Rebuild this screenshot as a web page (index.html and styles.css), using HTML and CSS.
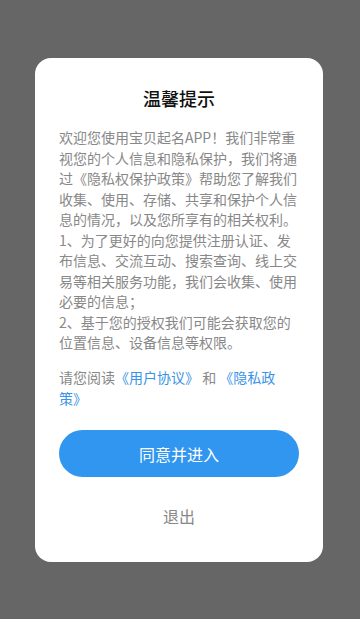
FILE: index.html
```html
<!DOCTYPE html>
<html lang="zh">
<head>
<meta charset="utf-8">
<link rel="stylesheet" href="styles.css">
</head>
<body>
<div class="screen">
  <div class="dialog">
    <h1 class="title">温馨提示</h1>
    <p class="body">欢迎您使用宝贝起名APP！我们非常重视您的个人信息和隐私保护，我们将通过《隐私权保护政策》帮助您了解我们收集、使用、存储、共享和保护个人信息的情况，以及您所享有的相关权利。<br>1、为了更好的向您提供注册认证、发布信息、交流互动、搜索查询、线上交易等相关服务功能，我们会收集、使用必要的信息；<br>2、基于您的授权我们可能会获取您的位置信息、设备信息等权限。</p>
    <p class="body links">请您阅读<span class="link">《用户协议》</span> 和 <span class="link">《隐私政<br>策》</span></p>
    <div class="btn">同意并进入</div>
    <div class="exit">退出</div>
  </div>
</div>
</body>
</html>
```
FILE: styles.css
```css
html, body {
  margin: 0;
  padding: 0;
}
body {
  background: #666666;
  font-family: "Noto Sans CJK SC", "Noto Sans", sans-serif;
}
.screen {
  width: 360px;
  height: 619px;
  padding-top: 58px;
  box-sizing: border-box;
}
.dialog {
  margin-left: 35px;
  width: 288px;
  height: 504px;
  box-sizing: border-box;
  background: #ffffff;
  border-radius: 16px;
  padding: 28px 24px 0 24px;
  display: flex;
  flex-direction: column;
}
.title {
  margin: 0;
  font-size: 18px;
  line-height: 24px;
  font-weight: 500;
  color: #111111;
  text-align: center;
}
.body {
  margin: 17px 0 0 0;
  font-size: 14px;
  line-height: 20.5px;
  color: #888888;
}
.links {
  margin-top: 14.5px;
}
.link {
  color: #3a93e6;
}
.btn {
  margin-top: 22px;
  height: 47px;
  border-radius: 24px;
  background: #3196f0;
  color: #ffffff;
  font-size: 16px;
  display: flex;
  align-items: center;
  justify-content: center;
}
.exit {
  margin-top: 28px;
  font-size: 16px;
  line-height: 22px;
  color: #888888;
  text-align: center;
}
```
